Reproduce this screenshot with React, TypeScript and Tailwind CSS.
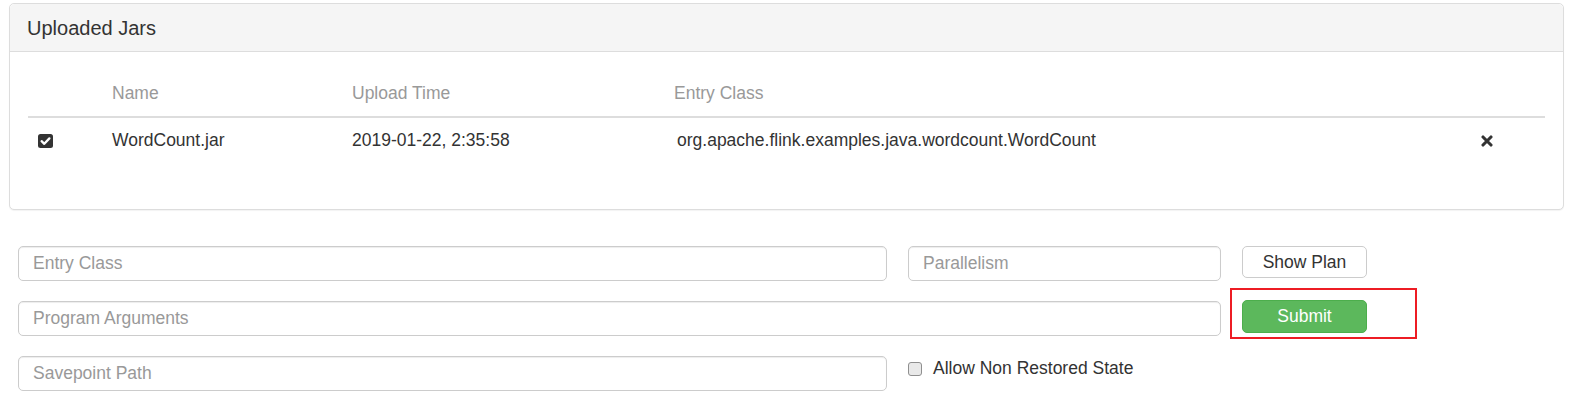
import React from "react";

const CheckedBox = () => (
  <svg width="15" height="14" viewBox="0 0 15 14">
    <rect x="0" y="0" width="15" height="14" rx="2.5" fill="#333" />
    <polyline
      points="3.6,7.2 6.3,9.8 11.4,4.4"
      fill="none"
      stroke="#fff"
      strokeWidth="2.3"
      strokeLinecap="round"
      strokeLinejoin="round"
    />
  </svg>
);

const Times = () => (
  <svg width="12" height="12" viewBox="0 0 12 12">
    <path d="M2 2 L10 10 M10 2 L2 10" stroke="#333" strokeWidth="3.1" strokeLinecap="round" />
  </svg>
);

const inputCls =
  "h-full rounded-[5px] border border-[#ccc] bg-white pl-[14px] text-[17.5px] text-[#555] outline-none shadow-[inset_0_1px_1px_rgba(0,0,0,0.075)] placeholder:text-[#999]";

const App = () => {
  return (
    <div className="w-[1590px] min-h-[419px] bg-white pt-[3px] font-['Liberation_Sans',Arial,sans-serif] text-[17.5px] text-[#333]">
      {/* uploaded jars panel */}
      <div className="ml-[9px] w-[1555px] rounded-[5px] border border-[#ddd] bg-white shadow-[0_1px_1px_rgba(0,0,0,0.05)]">
        <div className="flex h-[48px] items-center rounded-t-[5px] border-b border-[#ddd] bg-[#f5f5f5] pl-[17px] text-[20px] leading-[22px]">
          Uploaded Jars
        </div>
        <div className="px-[18px] pt-[19px] pb-[46px]">
          <table className="w-full table-fixed border-collapse">
            <thead>
              <tr className="border-b-2 border-[#ddd] text-left text-[#999]">
                <th className="w-[74px] px-[10px] py-[10px] font-normal leading-[25px]"></th>
                <th className="w-[240px] px-[10px] py-[10px] font-normal leading-[25px]">Name</th>
                <th className="w-[322px] px-[10px] py-[10px] font-normal leading-[25px]">Upload Time</th>
                <th className="w-[807px] px-[10px] py-[10px] font-normal leading-[25px]">Entry Class</th>
                <th className="w-[74px] px-[10px] py-[10px] font-normal leading-[25px]"></th>
              </tr>
            </thead>
            <tbody>
              <tr>
                <td className="px-[10px] py-[10px] leading-[25px]">
                  <div className="flex h-[25px] items-center">
                    <CheckedBox />
                  </div>
                </td>
                <td className="px-[10px] py-[10px] leading-[25px]">WordCount.jar</td>
                <td className="px-[10px] py-[10px] leading-[25px]">2019-01-22, 2:35:58</td>
                <td className="pl-[13px] pr-[10px] py-[10px] leading-[25px]">
                  org.apache.flink.examples.java.wordcount.WordCount
                </td>
                <td className="px-[10px] py-[10px] leading-[25px]">
                  <div className="flex h-[25px] items-center">
                    <Times />
                  </div>
                </td>
              </tr>
            </tbody>
          </table>
        </div>
      </div>

      {/* submit form */}
      <div className="ml-[18px] mt-[36px] flex flex-col gap-[20px]">
        <div className="flex h-[35px] items-start gap-[21px]">
          <input className={`${inputCls} w-[869px]`} placeholder="Entry Class" />
          <input className={`${inputCls} w-[313px]`} placeholder="Parallelism" />
          <button className="h-[32px] w-[125px] rounded-[5px] border border-[#ccc] bg-white text-[17.5px] text-[#333]">
            Show Plan
          </button>
        </div>

        <div className="flex h-[35px] items-start gap-[21px]">
          <input className={`${inputCls} w-[1203px]`} placeholder="Program Arguments" />
          <div className="relative -mt-[1px]">
            <button className="h-[33px] w-[125px] rounded-[5px] border border-[#4cae4c] bg-[#5cb85c] text-[17.5px] text-white">
              Submit
            </button>
            <div className="pointer-events-none absolute -left-[12px] -top-[12px] -right-[50px] -bottom-[6px] border-2 border-[#ed1c24]" />
          </div>
        </div>

        <div className="flex h-[35px] items-start gap-[21px]">
          <input className={`${inputCls} w-[869px]`} placeholder="Savepoint Path" />
          <label className="flex items-center gap-[11px] leading-[25px]">
            <span className="block h-[14px] w-[14px] rounded-[3px] border border-[#8f8f8f] bg-[#e9e9e9]" />
            Allow Non Restored State
          </label>
        </div>
      </div>
    </div>
  );
};

export default App;
